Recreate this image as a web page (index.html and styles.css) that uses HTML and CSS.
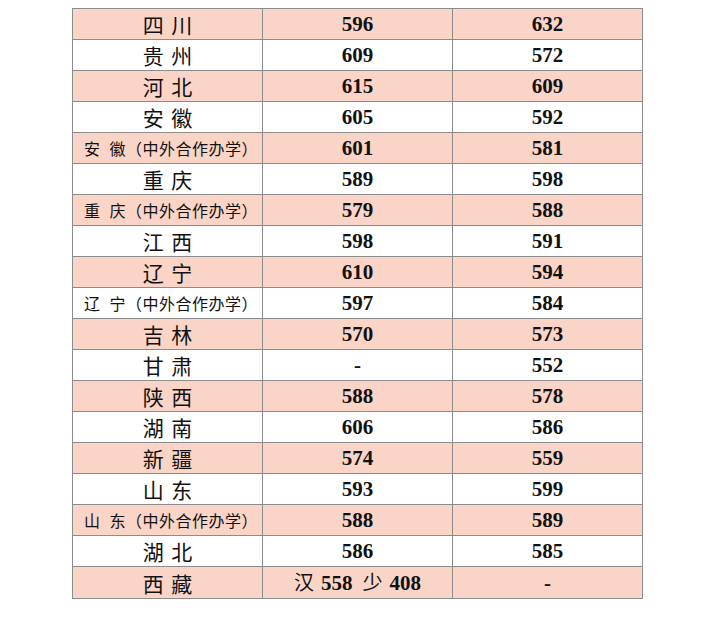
FILE: index.html
```html
<!DOCTYPE html>
<html lang="zh">
<head>
<meta charset="utf-8">
<title>分数线</title>
<link rel="stylesheet" href="styles.css">
</head>
<body>
<table class="scores">
  <tbody>
    <tr class="pink"><td class="prov">四 川</td><td class="num">596</td><td class="num">632</td></tr>
    <tr><td class="prov">贵 州</td><td class="num">609</td><td class="num">572</td></tr>
    <tr class="pink"><td class="prov">河 北</td><td class="num">615</td><td class="num">609</td></tr>
    <tr><td class="prov">安 徽</td><td class="num">605</td><td class="num">592</td></tr>
    <tr class="pink"><td class="prov small">安 徽（中外合作办学）</td><td class="num">601</td><td class="num">581</td></tr>
    <tr><td class="prov">重 庆</td><td class="num">589</td><td class="num">598</td></tr>
    <tr class="pink"><td class="prov small">重 庆（中外合作办学）</td><td class="num">579</td><td class="num">588</td></tr>
    <tr><td class="prov">江 西</td><td class="num">598</td><td class="num">591</td></tr>
    <tr class="pink"><td class="prov">辽 宁</td><td class="num">610</td><td class="num">594</td></tr>
    <tr><td class="prov small">辽 宁（中外合作办学）</td><td class="num">597</td><td class="num">584</td></tr>
    <tr class="pink"><td class="prov">吉 林</td><td class="num">570</td><td class="num">573</td></tr>
    <tr><td class="prov">甘 肃</td><td class="num">-</td><td class="num">552</td></tr>
    <tr class="pink"><td class="prov">陕 西</td><td class="num">588</td><td class="num">578</td></tr>
    <tr><td class="prov">湖 南</td><td class="num">606</td><td class="num">586</td></tr>
    <tr class="pink"><td class="prov">新 疆</td><td class="num">574</td><td class="num">559</td></tr>
    <tr><td class="prov">山 东</td><td class="num">593</td><td class="num">599</td></tr>
    <tr class="pink"><td class="prov small">山 东（中外合作办学）</td><td class="num">588</td><td class="num">589</td></tr>
    <tr><td class="prov">湖 北</td><td class="num">586</td><td class="num">585</td></tr>
    <tr class="pink"><td class="prov">西 藏</td><td class="num"><span class="cjk">汉</span>558<span class="cjk second">少</span>408</td><td class="num">-</td></tr>
  </tbody>
</table>
</body>
</html>
```

FILE: styles.css
```css
html, body {
  margin: 0;
  padding: 0;
  background: #ffffff;
}

body {
  padding: 8px 0 0 72px;
}

.scores {
  border-collapse: collapse;
  width: 571px;
  table-layout: fixed;
  border: 1px solid #8c8c8c;
}

.scores td {
  border: 1px solid #8c8c8c;
  height: 30px;
  padding: 0;
  text-align: center;
  vertical-align: middle;
  color: #111;
  width: 33.33%;
}

.scores tr.pink td {
  background: #fad4c6;
}

.prov {
  font-family: "Noto Sans CJK SC", sans-serif;
  font-size: 21px;
  line-height: 30px;
  word-spacing: 3px;
}

.prov.small {
  font-size: 16px;
  letter-spacing: 0.5px;
  text-align: left;
  padding-left: 11px;
  word-spacing: 5px;
}

.num {
  font-family: "Liberation Serif", "Noto Sans CJK SC", serif;
  font-weight: bold;
  font-size: 21px;
  line-height: 30px;
}

.num .cjk {
  font-family: "Noto Sans CJK SC", sans-serif;
  font-weight: normal;
  font-size: 20px;
  margin-right: 7px;
}

.num .cjk.second {
  margin-left: 10px;
}
```
